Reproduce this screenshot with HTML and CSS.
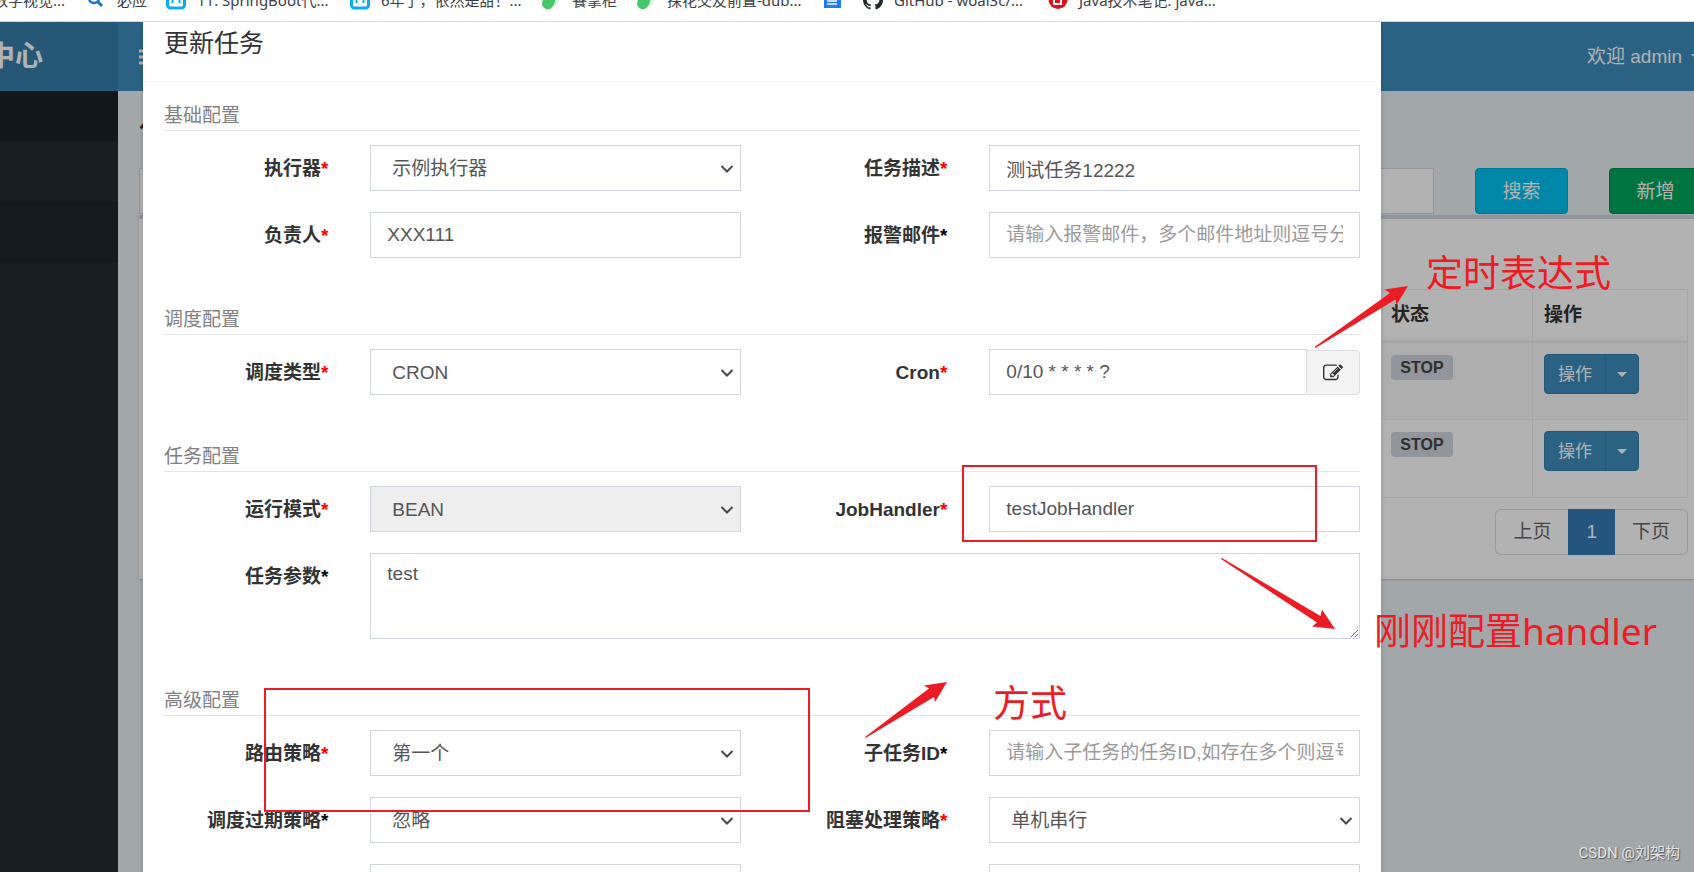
FILE: index.html
```html
<!DOCTYPE html>
<html lang="zh-CN">
<head>
<meta charset="utf-8">
<title>任务调度中心</title>
<link rel="stylesheet" href="styles.css">
</head>
<body>
<svg class="defs" aria-hidden="true">
  <symbol id="chevron" viewBox="0 0 14 14"><path d="M1.500 4 7 9.500l5.500-5.500" fill="none" stroke="#484848" stroke-width="2"/></symbol>
  <symbol id="tv" viewBox="0 0 20 20"><path d="M6 1l2.500 3M14 1l-2.500 3" stroke="#0bade8" stroke-width="2"/><rect x="1.500" y="4" width="17" height="14" rx="3" fill="#fff" stroke="#0bade8" stroke-width="3"/><path d="M6.500 10v3M13.500 10v3" stroke="#0bade8" stroke-width="2"/></symbol>
  <symbol id="leaf" viewBox="0 0 20 20"><path d="M14 2c4 5 5 10 2 13-2 2-5 1-7-1z" fill="#d9f3e4"/><path d="M1 14C1 9 5 4 12 3c3 4 3 9 0 13-2 3-5 4-7 3-2-1-4-3-4-5z" fill="#45c76a"/></symbol>
</svg>
<nav class="bookmarks" aria-label="书签栏">
  <ul class="bookmark-list">
    <li><a href="#">数字视觉...</a></li>
    <li><svg class="bm-icon" viewBox="0 0 20 20"><circle cx="8" cy="8" r="5" fill="none" stroke="#1b74d0" stroke-width="2.500"/><path d="M11 11l5 5" stroke="#1b74d0" stroke-width="3"/></svg><a href="#">必应</a></li>
    <li><svg class="bm-icon"><use href="#tv"/></svg><a href="#">11. SpringBoot代...</a></li>
    <li><svg class="bm-icon"><use href="#tv"/></svg><a href="#">6年了，依然是甜！...</a></li>
    <li><svg class="bm-icon"><use href="#leaf"/></svg><a href="#">餐掌柜</a></li>
    <li><svg class="bm-icon"><use href="#leaf"/></svg><a href="#">探花交友前置-dub...</a></li>
    <li><svg class="bm-icon" viewBox="0 0 20 20"><path d="M1 0h17v18H1z" fill="#1f7cf5"/><path d="M4 11h10M4 14h10" stroke="#fff" stroke-width="1.500"/></svg></li>
    <li><svg class="bm-icon" viewBox="0 0 16 16"><path fill="#24292e" d="M8 0a8 8 0 0 0-2.530 15.590c.4.070.550-.170.550-.380v-1.330c-2.230.480-2.700-1.070-2.700-1.070-.360-.920-.890-1.170-.890-1.170-.730-.500.050-.490.050-.490.800.060 1.230.830 1.230.830.720 1.220 1.870.870 2.330.660.070-.520.280-.870.510-1.070-1.780-.200-3.640-.890-3.640-3.950 0-.870.310-1.590.820-2.150-.080-.200-.360-1.020.080-2.120 0 0 .670-.210 2.200.820a7.600 7.600 0 0 1 4 0c1.530-1.040 2.200-.820 2.200-.820.440 1.100.160 1.920.080 2.120.510.560.820 1.270.820 2.150 0 3.070-1.870 3.750-3.650 3.950.290.250.540.730.540 1.480v2.160c0 .210.150.460.550.380A8 8 0 0 0 8 0z"/></svg><a href="#">GitHub - woai3c/...</a></li>
    <li><svg class="bm-icon" viewBox="0 0 20 20"><circle cx="10" cy="9.500" r="9.500" fill="#e0141c"/><path d="M6 4v10h7V9H7M11 9V5" fill="none" stroke="#fff" stroke-width="2"/></svg><a href="#">Java技术笔记: java...</a></li>
  </ul>
</nav>

<div class="app">
  <aside class="sidebar">
    <div class="logo">中心</div>
    <div class="side-head"></div>
    <div class="side-item"></div>
    <div class="side-item active"></div>
  </aside>
  <div class="main">
    <header class="topbar">
      <button class="toggle" type="button" aria-label="切换导航"><svg viewBox="0 0 18 16"><path d="M0 2h18M0 8h18M0 14h18" stroke="#fff" stroke-width="3"/></svg></button>
      <a class="user" href="#">欢迎 admin <i class="caret"></i></a>
    </header>
    <main class="content">
      <h1 class="page-title">任务管理</h1>
      <div class="filters">
        <input class="filter" type="text" aria-label="筛选">
        <button class="btn info" type="button">搜索</button>
        <button class="btn success" type="button">新增</button>
      </div>
      <div class="box">
        <table class="jobs">
          <thead><tr><th class="rest"></th><th class="status">状态</th><th class="action">操作</th></tr></thead>
          <tbody>
            <tr><td></td><td><span class="tag">STOP</span></td><td><span class="btn-group"><button type="button">操作</button><button class="drop" type="button" aria-label="更多操作"><i class="caret"></i></button></span></td></tr>
            <tr><td></td><td><span class="tag">STOP</span></td><td><span class="btn-group"><button type="button">操作</button><button class="drop" type="button" aria-label="更多操作"><i class="caret"></i></button></span></td></tr>
          </tbody>
        </table>
        <nav class="pager" aria-label="分页"><a href="#">上页</a><a class="current" href="#">1</a><a href="#">下页</a></nav>
      </div>
    </main>
  </div>

  <div class="backdrop">
    <form class="modal">
      <h2 class="modal-title">更新任务</h2>
      <section class="group">
        <h3>基础配置</h3>
        <div class="fields">
          <label for="executor">执行器<b class="req">*</b></label>
          <div class="field"><select id="executor"><option>示例执行器</option></select><svg class="chevron"><use href="#chevron"/></svg></div>
          <label for="desc">任务描述<b class="req">*</b></label>
          <div class="field"><input id="desc" type="text" value="测试任务12222"></div>
          <label for="owner">负责人<b class="req">*</b></label>
          <div class="field"><input id="owner" type="text" value="XXX111"></div>
          <label for="mail">报警邮件<b class="opt">*</b></label>
          <div class="field"><input id="mail" type="text" placeholder="请输入报警邮件，多个邮件地址则逗号分隔"></div>
        </div>
      </section>
      <section class="group">
        <h3>调度配置</h3>
        <div class="fields">
          <label for="type">调度类型<b class="req">*</b></label>
          <div class="field"><select id="type"><option>CRON</option></select><svg class="chevron"><use href="#chevron"/></svg></div>
          <label for="cron">Cron<b class="req">*</b></label>
          <div class="field with-addon"><input id="cron" type="text" value="0/10 * * * * ?"><button class="addon" type="button" aria-label="编辑 Cron"><svg viewBox="0 0 1792 1792"><path fill="#333" d="M888 1184l116-116-152-152-116 116v56h96v96h56zm440-720q-16-16-33 1L945 815q-17 17-1 33t33-1l350-350q17-17 1-33zm80 594v190q0 119-84.500 203.500T1120 1536H288q-119 0-203.500-84.500T0 1248V416q0-119 84.500-203.500T288 128h832q63 0 117 25 15 7 18 23 3 17-9 29l-49 49q-14 14-32 8-23-6-45-6H288q-66 0-113 47t-47 113v832q0 66 47 113t113 47h832q66 0 113-47t47-113v-126q0-13 9-22l64-64q15-15 35-7t20 29zm-96-738l288 288-672 672H640V992zm444 132l-92 92-288-288 92-92q28-28 68-28t68 28l152 152q28 28 28 68t-28 68z"/></svg></button></div>
        </div>
      </section>
      <section class="group">
        <h3>任务配置</h3>
        <div class="fields">
          <label for="mode">运行模式<b class="req">*</b></label>
          <div class="field"><select id="mode" disabled><option>BEAN</option></select><svg class="chevron"><use href="#chevron"/></svg></div>
          <label for="handler">JobHandler<b class="req">*</b></label>
          <div class="field"><input id="handler" type="text" value="testJobHandler"></div>
          <label for="param">任务参数<b class="opt">*</b></label>
          <div class="field wide"><textarea id="param">test</textarea></div>
        </div>
      </section>
      <section class="group">
        <h3>高级配置</h3>
        <div class="fields">
          <label for="route">路由策略<b class="req">*</b></label>
          <div class="field"><select id="route"><option>第一个</option></select><svg class="chevron"><use href="#chevron"/></svg></div>
          <label for="child">子任务ID<b class="opt">*</b></label>
          <div class="field"><input id="child" type="text" placeholder="请输入子任务的任务ID,如存在多个则逗号分隔"></div>
          <label for="misfire">调度过期策略<b class="opt">*</b></label>
          <div class="field"><select id="misfire"><option>忽略</option></select><svg class="chevron"><use href="#chevron"/></svg></div>
          <label for="block">阻塞处理策略<b class="req">*</b></label>
          <div class="field"><select id="block"><option>单机串行</option></select><svg class="chevron"><use href="#chevron"/></svg></div>
          <div></div>
          <div class="field"><input type="text" aria-label="任务超时时间"></div>
          <div></div>
          <div class="field"><input type="text" aria-label="失败重试次数"></div>
        </div>
      </section>
    </form>
  </div>
</div>

<svg class="marks" aria-hidden="true">
  <g fill="none" stroke="#ed1c24" stroke-width="2"><rect x="963" y="466" width="353" height="75"/><rect x="265" y="689" width="544" height="122"/></g>
  <g fill="#ed1c24">
    <path d="M1314.500 347 1390 293 1384.500 289.500 1408 286 1396.500 305 1395.500 299.500 1315.500 348z"/>
    <path d="M1222 558 1320.500 616 1322 609.500 1335 629 1312 626.500 1317 622.500 1221 559z"/>
    <path d="M865 737 929 688.500 924 685.500 947 682 935 702 934 697 865.500 738z"/>
  </g>
</svg>
<p class="note note-cron">定时表达式</p>
<p class="note note-handler">刚刚配置handler</p>
<p class="note note-route">方式</p>
<p class="watermark">CSDN @刘架构</p>
</body>
</html>
```

FILE: styles.css
```css
* { box-sizing: border-box; }

body {
  margin: 0;
  height: 100vh;
  display: flex;
  flex-direction: column;
  position: relative;
  overflow: hidden;
  background: #fff;
  color: #333;
  font: 19px/27px "Liberation Sans", "Noto Sans CJK SC", sans-serif;
}

h1, h2, h3, p, ul { margin: 0; padding: 0; font-weight: 400; }
a { color: inherit; text-decoration: none; }
button, input, select, textarea { font: inherit; margin: 0; }
.defs { position: absolute; width: 0; height: 0; }

/* Browser bookmarks, scrolled half out of view */
.bookmarks {
  flex: none;
  height: 22px;
  overflow: hidden;
  border-bottom: 1px solid #d5d6d7;
}
.bookmark-list {
  display: grid;
  grid-template-columns: 86px 80px 184px 191px 95px 187px 40px 185px 1fr;
  margin-top: -11px;
  height: 20px;
  list-style: none;
  font: 15px/22px "Noto Sans", "Noto Sans CJK SC", sans-serif;
  color: #3c4043;
}
.bookmark-list li { display: flex; align-items: center; gap: 11px; white-space: nowrap; }
.bookmark-list li:first-child { justify-content: flex-end; padding-right: 21px; }
.bm-icon { width: 20px; height: 20px; flex: none; }

/* Admin page behind the dialog */
.app { flex: 1; display: flex; position: relative; min-height: 0; overflow: hidden; }
.sidebar { flex: none; width: 118px; background: #222d32; }
.logo {
  display: flex;
  align-items: center;
  justify-content: flex-end;
  height: 69px;
  padding-right: 75px;
  overflow: hidden;
  background: #367fa9;
  color: #fff;
  font-size: 28px;
  font-weight: 700;
  white-space: nowrap;
}
.side-head { height: 51px; background: #1b2327; }
.side-item { height: 59px; }
.side-item.active { height: 62px; background: #1d262a; }

.main { flex: 1; min-width: 0; display: flex; flex-direction: column; background: #e9f0f4; overflow: hidden; }
.topbar {
  display: flex;
  justify-content: space-between;
  align-items: center;
  height: 69px;
  padding-left: 21px;
  background: #3c8dbc;
  color: #fff;
}
.toggle { border: 0; padding: 0; background: none; line-height: 0; }
.toggle svg { width: 18px; height: 16px; }
.user { display: flex; align-items: center; gap: 9px; white-space: nowrap; margin-right: -7px; }
.user .caret { flex: none; }
.caret { display: inline-block; border: 5px solid transparent; border-top-color: currentColor; border-bottom: 0; }

.content { padding: 21px 0 0 21px; }
.page-title { font-size: 33px; line-height: 36px; color: #333; }
.filters { display: flex; gap: 41px; margin: 20px -8px 0 0; }
.filter { flex: 1; min-width: 0; height: 46px; border: 1px solid #d2d6de; background: #fff; }
.btn { width: 93px; height: 46px; border: 1px solid; border-radius: 4px; color: #fff; }
.btn.info { background: #00c0ef; border-color: #00acd6; }
.btn.success { background: #00a65a; border-color: #008d4c; }
.box {
  margin-top: 1px;
  padding: 70px 6px 24px 10px;
  background: #fff;
  border-top: 4px solid #d2d6de;
  box-shadow: 0 1px 2px rgba(0, 0, 0, .2);
}
.jobs { width: 100%; border-collapse: collapse; table-layout: fixed; border: 1px solid #f4f4f4; }
.jobs th, .jobs td { border: 1px solid #f0f0f0; padding: 11px; text-align: left; vertical-align: top; }
.jobs th { height: 52px; border-bottom: 3px solid #f0f0f0; color: #333; }
.jobs td { height: 78px; }
.jobs tbody tr:first-child { background: #f9f9f9; }
.jobs .status { width: 153px; }
.jobs .action { width: 155px; }
.tag {
  display: block;
  width: 62px;
  margin-top: 1px;
  border-radius: 4px;
  background: #d2d6de;
  color: #444;
  font-size: 16px;
  font-weight: 700;
  line-height: 25px;
  text-align: center;
}
.btn-group { display: flex; width: 95px; }
.btn-group button {
  flex: none;
  width: 62px;
  height: 40px;
  padding: 0;
  border: 1px solid #367fa9;
  border-radius: 4px 0 0 4px;
  background: #3c8dbc;
  color: #fff;
  font-size: 17px;
}
.btn-group .drop { width: 34px; margin-left: -1px; border-radius: 0 4px 4px 0; display: flex; align-items: center; justify-content: center; }
.pager { display: flex; justify-content: flex-end; margin-top: 11px; }
.pager a { padding: 8px 17px 9px; border: 1px solid #ddd; color: #666; }
.pager a:first-child { border-radius: 6px 0 0 6px; border-right: 0; }
.pager a:last-child { border-radius: 0 6px 6px 0; border-left: 0; }
.pager .current { background: #337ab7; border-color: #337ab7; color: #fff; }

/* Dialog */
.backdrop {
  position: absolute;
  inset: 0;
  padding: 0 313px 0 143px;
  background: rgba(0, 0, 0, .3);
}
.modal { background: #fff; box-shadow: 0 2px 4px rgba(0, 0, 0, .2); padding-bottom: 21px; }
.modal-title {
  padding: 3px 21px 20px;
  border-bottom: 1px solid #f4f4f4;
  font-size: 25px;
  line-height: 36px;
}
.group { padding-top: 20px; }
.group + .group { padding-top: 48px; }
.group h3 {
  margin: 0 21px 14px;
  border-bottom: 1px solid #e5e5e5;
  color: #808080;
  font-size: 19px;
  line-height: 28px;
}
.fields { display: grid; grid-template-columns: 2fr 4fr 2fr 4fr; row-gap: 21px; }
.fields label { padding-right: 21px; text-align: right; font-weight: 700; line-height: 47px; height: 46px; white-space: nowrap; }
.req { color: #f00; }
.opt { color: #000; }
.field { position: relative; display: flex; min-width: 0; padding: 0 21px; }
.field.wide { grid-column: span 3; }
.field input, .field select, .field textarea {
  flex: 1;
  min-width: 0;
  width: 100%;
  height: 46px;
  padding: 8px 16px;
  border: 1px solid #d2d6de;
  border-radius: 0;
  background: #fff;
  color: #555;
}
.field select { appearance: none; padding: 8px 21px; opacity: 1; }
.field select:disabled { background: #eee; }
.field textarea { height: 86px; padding-top: 6px; resize: vertical; }
.field input::placeholder { color: #999; opacity: 1; }
.chevron { position: absolute; right: 28px; top: 17px; width: 14px; height: 14px; pointer-events: none; }
.addon {
  flex: none;
  width: 54px;
  margin: 1px 0 0 -1px;
  padding: 0;
  border: 1px solid #ddd;
  border-radius: 0 4px 4px 0;
  background: #f4f4f4;
  line-height: 0;
}
.addon svg { width: 20px; height: 20px; }

/* Hand-drawn annotations over the page */
.marks { position: absolute; left: 0; top: 0; width: 100%; height: 100%; pointer-events: none; }
.note {
  position: absolute;
  color: #ed1c24;
  font: 37px/48px "Noto Sans", "Noto Sans CJK SC", sans-serif;
  white-space: nowrap;
}
.note-cron { left: 1426px; top: 249px; }
.note-handler { left: 1374px; top: 607px; }
.note-route { left: 993px; top: 679px; }
.watermark {
  position: absolute;
  right: 14px;
  bottom: 8px;
  color: #e4e4e4;
  font: 15px/22px Roboto, "Noto Sans CJK SC", sans-serif;
  text-shadow: 1px 1px 1px #555;
}
```
